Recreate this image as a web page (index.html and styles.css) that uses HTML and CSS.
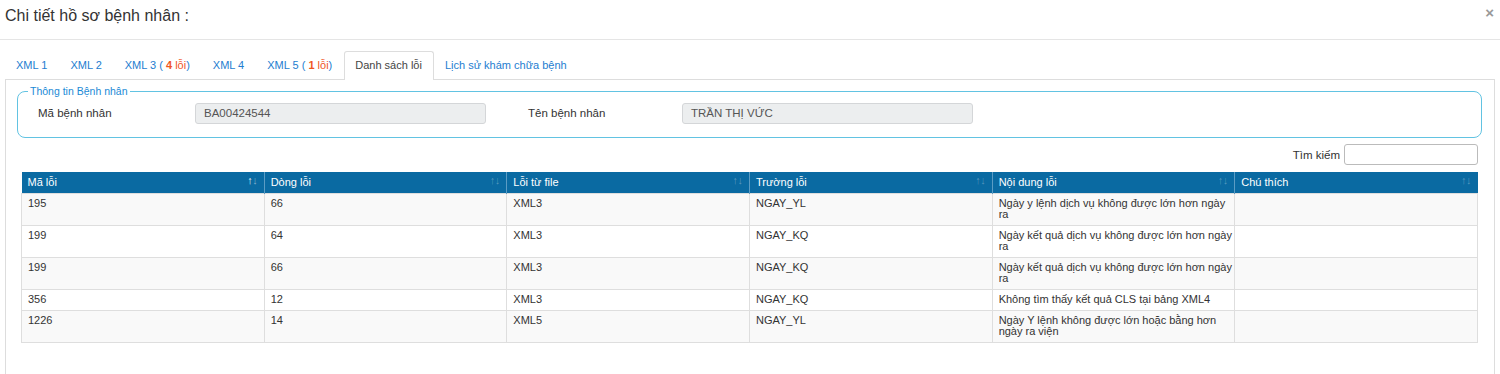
FILE: index.html
```html
<!DOCTYPE html>
<html>
<head>
    <title>Chi tiết hồ sơ bệnh nhân</title>
    <link rel="stylesheet" href="styles.css">
</head>
<body>
    <div class="modal-header">
        <h4 class="modal-title">Chi tiết hồ sơ bệnh nhân :</h4>
        <button class="close">&times;</button>
    </div>

    <div class="modal-body">
        <ul class="nav-tabs">
            <li><a>XML 1</a></li>
            <li><a>XML 2</a></li>
            <li><a>XML 3 ( <b class="err">4</b> <span class="err">lỗi</span>)</a></li>
            <li><a>XML 4</a></li>
            <li><a>XML 5 ( <b class="err">1</b> <span class="err">lỗi</span>)</a></li>
            <li class="active"><a>Danh sách lỗi</a></li>
            <li><a>Lịch sử khám chữa bệnh</a></li>
        </ul>

        <div class="tab-content">
            <fieldset class="patient-box">
                <legend>Thông tin Bệnh nhân</legend>
                <div class="patient-row">
                    <label>Mã bệnh nhân</label>
                    <div class="readonly">BA00424544</div>
                    <label class="second">Tên bệnh nhân</label>
                    <div class="readonly">TRẦN THỊ VỨC</div>
                </div>
            </fieldset>

            <div class="table-wrap">
                <div class="search">
                    <label>Tìm kiếm</label>
                    <input type="text">
                </div>

                <table class="err-table">
                    <thead>
                        <tr>
                            <th class="sorted">Mã lỗi</th>
                            <th>Dòng lỗi</th>
                            <th>Lỗi từ file</th>
                            <th>Trường lỗi</th>
                            <th>Nội dung lỗi</th>
                            <th>Chú thích</th>
                        </tr>
                    </thead>
                    <tbody>
                        <tr>
                            <td>195</td><td>66</td><td>XML3</td><td>NGAY_YL</td>
                            <td>Ngày y lệnh dịch vụ không được lớn hơn ngày ra</td><td></td>
                        </tr>
                        <tr>
                            <td>199</td><td>64</td><td>XML3</td><td>NGAY_KQ</td>
                            <td>Ngày kết quả dịch vụ không được lớn hơn ngày ra</td><td></td>
                        </tr>
                        <tr>
                            <td>199</td><td>66</td><td>XML3</td><td>NGAY_KQ</td>
                            <td>Ngày kết quả dịch vụ không được lớn hơn ngày ra</td><td></td>
                        </tr>
                        <tr>
                            <td>356</td><td>12</td><td>XML3</td><td>NGAY_KQ</td>
                            <td>Không tìm thấy kết quả CLS tại bảng XML4</td><td></td>
                        </tr>
                        <tr>
                            <td>1226</td><td>14</td><td>XML5</td><td>NGAY_YL</td>
                            <td>Ngày Y lệnh không được lớn hoặc bằng hơn ngày ra viện</td><td></td>
                        </tr>
                    </tbody>
                </table>
            </div>
        </div>
    </div>
</body>
</html>
```

FILE: styles.css
```css
:root {
    --link: #247dd0;
    --err: #f0561f;
    --head-bg: #0a6aa2;
    --cell-border: #dedede;
    --info: #62c3e2;
}

* {
    box-sizing: border-box;
}

body {
    margin: 0;
    font-family: 'Liberation Sans', Arial, sans-serif;
    font-size: 11.5px;
    color: #333;
    background: #fff;
}

.modal-header {
    height: 40px;
    border-bottom: 1px solid #e5e5e5;
    display: flex;
    align-items: flex-start;
    justify-content: space-between;
    padding: 5px 6px 0 5px;
}

.modal-title {
    margin: 0;
    font-size: 16px;
    font-weight: normal;
    color: #333;
    line-height: 22px;
}

.close {
    border: none;
    background: none;
    padding: 0;
    font-size: 15px;
    font-weight: bold;
    color: #999;
    line-height: 16px;
    font-family: 'Liberation Sans', Arial, sans-serif;
}

.modal-body {
    padding: 11px 5px 0 5px;
}

.nav-tabs {
    list-style: none;
    margin: 0;
    padding: 0;
    display: flex;
    height: 28px;
}

.nav-tabs li a {
    display: block;
    height: 28px;
    line-height: 26px;
    padding: 0 11px 0 10px;
    color: var(--link);
    font-size: 11px;
    border: 1px solid transparent;
    border-bottom: none;
    border-radius: 3px 3px 0 0;
}

.nav-tabs li.active a {
    color: #444;
    background: #fff;
    border-color: #ddd;
    height: 29px;
    position: relative;
    z-index: 1;
}

.err {
    color: var(--err);
}

.tab-content {
    border: 1px solid #ddd;
    border-bottom: none;
    padding: 5px 12px 40px 11px;
    min-height: 300px;
}

.patient-box {
    margin: 0;
    border: 1.5px solid var(--info);
    border-radius: 8px;
    padding: 6px 20px 0 20px;
    height: 53px;
}

.patient-box legend {
    font-size: 10.5px;
    color: #1a8ad6;
    padding: 0 2px;
    margin-left: -10px;
    line-height: 12px;
}

.patient-row {
    display: flex;
    align-items: center;
    height: 20px;
}

.patient-row label {
    width: 157px;
    color: #333;
}

.patient-row label.second {
    width: 154px;
    margin-left: 42px;
}

.readonly {
    width: 291px;
    height: 21px;
    line-height: 19px;
    background: #eceeef;
    border: 1px solid #d4d6d8;
    border-radius: 3px;
    padding: 0 8px;
    color: #555;
}

.table-wrap {
    padding: 0 4px;
}

.search {
    display: flex;
    justify-content: flex-end;
    align-items: center;
    gap: 4px;
    margin-top: 6px;
    height: 21px;
}

.search input {
    width: 134px;
    height: 21px;
    border: 1px solid #bbb;
    border-radius: 3px;
    font-family: inherit;
}

.err-table {
    width: 100%;
    margin-top: 7px;
    border-collapse: collapse;
    table-layout: fixed;
    font-size: 11px;
}

.err-table th {
    background: var(--head-bg);
    color: #fff;
    font-weight: normal;
    text-align: left;
    height: 21px;
    padding: 0 18px 0 6px;
    border-left: 1px solid #5b9cc4;
    position: relative;
}

.err-table th:first-child {
    border-left: none;
}

/* sort arrows: up + down */
.err-table th::before,
.err-table th::after {
    position: absolute;
    top: 1px;
    font-size: 11px;
    line-height: 14px;
    color: rgba(255, 255, 255, 0.3);
}

.err-table th::before {
    content: '\2191';
    right: 11px;
}

.err-table th::after {
    content: '\2193';
    right: 6px;
}

.err-table th.sorted::before {
    color: rgba(255, 255, 255, 0.9);
}

.err-table th.sorted::after {
    color: rgba(255, 255, 255, 0.45);
}

.err-table td {
    border: 1px solid var(--cell-border);
    padding: 4px 2px 5px 6px;
    line-height: 11px;
    vertical-align: top;
    color: #333;
}

.err-table tbody tr:nth-child(odd) {
    background: #f9f9f9;
}
```
